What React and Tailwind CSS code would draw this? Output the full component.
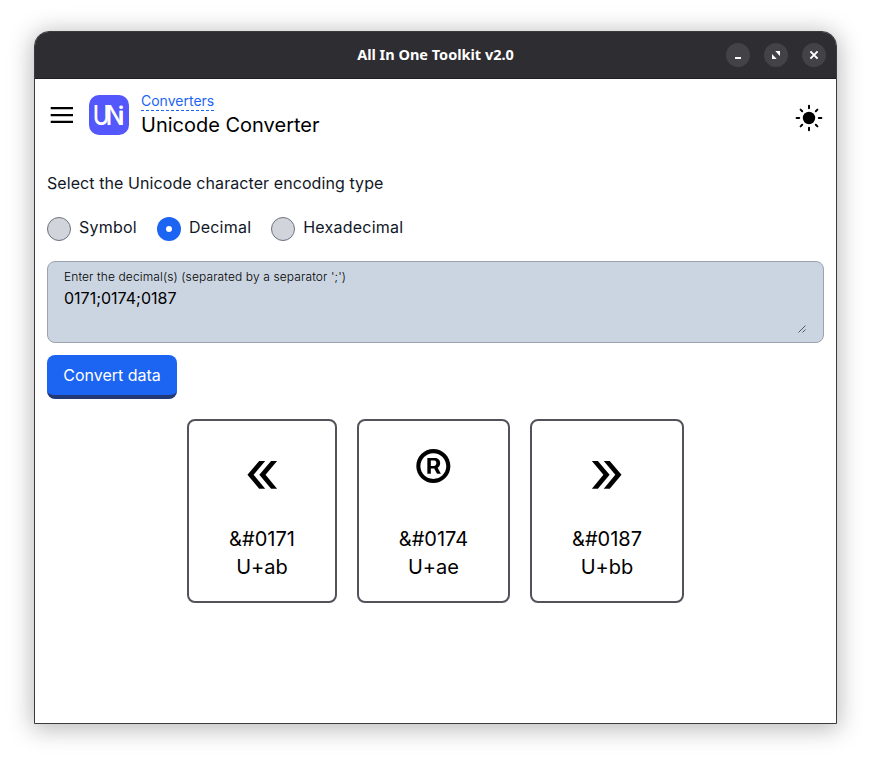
import React from "react";

function TitleBar() {
  return (
    <header className="grid h-[47px] shrink-0 grid-cols-[1fr_auto_1fr] items-center border-b border-[#1f1f23] bg-[#2e2d32] pr-[10px]">
      <span />
      <h1 className="pl-[10px] font-['Noto_Sans',sans-serif] text-[14.5px] font-bold text-white">All In One Toolkit v2.0</h1>
      <div className="flex justify-end gap-[14px]">
        <button className="size-6 rounded-full bg-[#434247]" aria-label="Minimize">
          <svg className="size-6" viewBox="0 0 24 24"><path fill="#fff" d="M9 14h6v2H9z" /></svg>
        </button>
        <button className="size-6 rounded-full bg-[#434247]" aria-label="Maximize">
          <svg className="size-6" viewBox="0 0 24 24"><path fill="#fff" d="M11.3 8H16v4.9l-1.6-1.5-1.5-1.7zM8 11.1V16h4.7l-1.6-1.7-1.5-1.6z" /></svg>
        </button>
        <button className="size-6 rounded-full bg-[#434247]" aria-label="Close">
          <svg className="size-6" viewBox="0 0 24 24"><path stroke="#fff" strokeWidth="2" d="M8.4 8.4l7.2 7.2M15.6 8.4l-7.2 7.2" /></svg>
        </button>
      </div>
    </header>
  );
}

function Logo() {
  return (
    <svg className="ml-[15px] size-10" viewBox="0 0 40 40">
      <rect width="40" height="40" rx="10" fill="#5457fb" />
      <g fill="#fff" fontFamily="Inter, sans-serif" fontWeight="500">
        <text x="3.7" y="30.3" fontSize="27" textLength="17" lengthAdjust="spacingAndGlyphs">U</text>
        <text x="16.6" y="30.3" fontSize="27" textLength="19" lengthAdjust="spacingAndGlyphs">N</text>
        <path fill="#5457fb" d="M28 9h9v6.4h-9z" />
        <text x="28.8" y="30.3" fontSize="25" fontWeight="600">i</text>
      </g>
    </svg>
  );
}

function Sun() {
  return (
    <svg className="mt-[8px] size-[30px]" viewBox="0 0 30 30" stroke="#000" strokeWidth="2" strokeLinecap="round">
      <circle cx="15" cy="15" r="6.2" stroke="none" />
      <path d="M15 2.8v2.4M15 24.8v2.4M2.6 15h2.6M24.8 15h2.6M6.6 6.6l1.6 1.6M21.8 21.8l1.6 1.6M6.6 23.4l1.6-1.6M21.8 8.2l1.6-1.6" />
    </svg>
  );
}

function Radio({ label, checked }) {
  return (
    <label className="flex items-center gap-2">
      <span className={checked ? "mt-[3px] flex size-6 items-center justify-center rounded-full bg-[#1c64f2]" : "mt-[3px] size-6 rounded-full border border-[#6b7280] bg-[#d1d5db]"}>
        {checked && <span className="size-[6px] rounded-full bg-white" />}
      </span>
      <span className="tracking-[0.014em] text-[#111827]">{label}</span>
    </label>
  );
}

const results = [
  { symbol: "«", decimal: "&#0171", hex: "U+ab", width: "w-[150px]" },
  { symbol: "®", decimal: "&#0174", hex: "U+ae", width: "w-[153px]" },
  { symbol: "»", decimal: "&#0187", hex: "U+bb", width: "w-[154px]" },
];

export default function App() {
  return (
    <div className="h-[761px] w-[871px] bg-white pt-[31px] pl-[34px] font-[Inter,sans-serif] text-black">
      <div className="flex h-[693px] w-[803px] flex-col overflow-hidden rounded-t-[15px] border border-[#393b3e] bg-white shadow-[0_3px_24px_2px_rgba(0,0,0,0.28)]">
        <TitleBar />
        <main className="px-3 pt-4">
          <nav className="flex h-[46px] items-start">
            <svg className="mt-1 ml-[3px] h-8 w-6" viewBox="0 0 24 32"><path d="M.7 8H23v2.2H.7zM.7 15H23v2.2H.7zM.7 21.8H23V24H.7z" /></svg>
            <Logo />
            <div className="ml-3 flex flex-col items-start">
              <a className="h-4 border-b border-dashed border-[#1c64f2] text-sm leading-[12px] text-[#1c64f2]">Converters</a>
              <h2 className="text-xl leading-7 font-normal">Unicode Converter</h2>
            </div>
            <div className="mr-0 ml-auto"><Sun /></div>
          </nav>
          <p className="mt-[30px] text-base leading-6 tracking-[0.005em] text-[#111827]">Select the Unicode character encoding type</p>
          <div className="mt-5 flex h-6 items-center gap-5">
            <Radio label="Symbol" />
            <Radio label="Decimal" checked />
            <Radio label="Hexadecimal" />
          </div>
          <div className="mt-[22px] flex h-[82px] flex-col rounded-lg border border-[#9ca3af] bg-[#cbd5e1] px-4 pt-[7px]">
            <label className="text-xs leading-4 font-light tracking-[0.01em]">Enter the decimal(s) (separated by a separator ';')</label>
            <div className="flex h-12 items-end justify-between">
              <span className="self-start pt-[1px] text-base leading-6">0171;0174;0187</span>
              <svg className="mb-[-1px] size-[10px]" viewBox="0 0 10 10" stroke="#3f4651" strokeWidth=".9"><path d="M1.5 8.5l7-7M5.5 8.5l3-3" /></svg>
            </div>
          </div>
          <button className="mt-3 block h-11 w-[130px] rounded-lg border-b-4 border-[#233876] bg-[#1c64f2] text-base leading-6 text-white">Convert data</button>
          <section className="mt-5 flex justify-center gap-5">
            {results.map((r) => (
              <article key={r.decimal} className={`flex h-[184px] flex-col items-center rounded-lg border-2 border-[#52525b] pt-[20px] text-xl leading-7 font-normal ${r.width}`}>
                <span className="mb-8 h-[52px] text-6xl leading-[60px]">{r.symbol}</span>
                <span>{r.decimal}</span>
                <span>{r.hex}</span>
              </article>
            ))}
          </section>
        </main>
      </div>
    </div>
  );
}
